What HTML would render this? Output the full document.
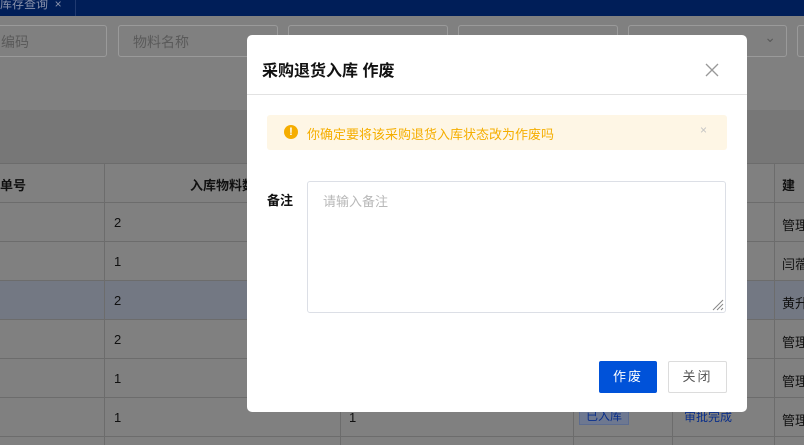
<!DOCTYPE html><html><head><meta charset="utf-8"><style>
*{box-sizing:border-box;margin:0;padding:0}
html,body{width:804px;height:445px;overflow:hidden}
body{position:relative;background:#808080;font-family:"Liberation Sans","Noto Sans CJK SC",sans-serif;font-size:13px;color:#222}
.a{position:absolute;white-space:nowrap}
.top{left:0;top:0;width:804px;height:16px;background:#001e58;color:#8a93ab;font-size:12px;overflow:hidden}
.inp{top:25px;height:32px;border:1px solid #9a9a9a;border-radius:3px;color:#5a5a5a;font-size:14px;padding:6px 14px}
.th{top:110px;left:0;width:804px;height:53px;background:#777}
.hl{height:1px;background:#6c6c6c;left:0;width:804px}
.vl{width:1px;background:#6c6c6c;top:163px;height:282px}
.c{color:#111;font-size:13px}
.modal{left:247px;top:35px;width:500px;height:377px;background:#fff;border-radius:5px}
</style></head><body>
<div class="a top"><span class="a" style="left:0;top:-5px">库存查询 &nbsp;×</span><div class="a" style="left:75px;top:0;width:1px;height:16px;background:#203a70"></div></div>
<div class="a inp" style="left:-10px;width:117px;padding-left:10px">编码</div>
<div class="a inp" style="left:118px;width:160px">物料名称</div>
<div class="a inp" style="left:288px;width:160px"></div>
<div class="a inp" style="left:458px;width:160px"></div>
<div class="a inp" style="left:628px;width:159px"><span class="a" style="right:10px;top:3px">⌄</span></div>
<div class="a inp" style="left:797px;width:40px"></div>
<div class="a th"></div>
<div class="a" style="left:0;top:280px;width:804px;height:39px;background:#737883"></div>
<div class="a hl" style="top:163px"></div><div class="a hl" style="top:202px"></div><div class="a hl" style="top:241px"></div><div class="a hl" style="top:280px"></div><div class="a hl" style="top:319px"></div><div class="a hl" style="top:358px"></div><div class="a hl" style="top:397px"></div><div class="a hl" style="top:436px"></div>
<div class="a vl" style="left:104px;top:163px"></div><div class="a vl" style="left:340px"></div><div class="a vl" style="left:573px"></div><div class="a vl" style="left:672px"></div><div class="a vl" style="left:774px;top:163px"></div>
<div class="a c" style="left:0;top:175px;font-weight:bold">单号</div>
<div class="a c" style="left:190px;top:175px;font-weight:bold">入库物料数</div>
<div class="a c" style="left:782px;top:175px;font-weight:bold">建</div>
<div class="a c" style="left:114px;top:215px">2</div><div class="a c" style="left:114px;top:254px">1</div><div class="a c" style="left:114px;top:293px">2</div><div class="a c" style="left:114px;top:332px">2</div><div class="a c" style="left:114px;top:371px">1</div><div class="a c" style="left:114px;top:410px">1</div>
<div class="a c" style="left:349px;top:410px">1</div>
<div class="a c" style="left:782px;top:215px">管理</div><div class="a c" style="left:782px;top:254px">闫蓿</div><div class="a c" style="left:782px;top:293px">黄升</div><div class="a c" style="left:782px;top:332px">管理</div><div class="a c" style="left:782px;top:371px">管理</div><div class="a c" style="left:782px;top:410px">管理</div>
<div class="a" style="left:579px;top:403px;width:50px;height:22px;background:#6e7890;border:1px solid #5c6c90;color:#0a2f8a;font-size:12px;padding:3px 6px">已入库</div>
<div class="a" style="left:684px;top:408px;color:#0a2f8a;font-size:12px">审批完成</div>
<div class="a modal">
<div class="a" style="left:15px;top:22px;font-size:16px;font-weight:bold;color:#111">采购退货入库 作废</div>
<svg class="a" style="left:458px;top:28px" width="14" height="14"><path d="M1 1L13 13M13 1L1 13" stroke="#999" stroke-width="1.3"/></svg>
<div class="a" style="left:0;top:59px;width:500px;height:1px;background:#e2e2e2"></div>
<div class="a" style="left:20px;top:80px;width:460px;height:35px;background:#fef6e5;border-radius:3px">
<div class="a" style="left:17px;top:10px;width:14px;height:14px;border-radius:50%;background:#f5ad00;color:#fff;font-size:11px;font-weight:bold;text-align:center;line-height:14px">!</div>
<div class="a" style="left:40px;top:9px;color:#f5ae00;font-size:13px">你确定要将该采购退货入库状态改为作废吗</div>
<div class="a" style="left:433px;top:8px;color:#c4c4c4;font-size:12px">×</div>
</div>
<div class="a" style="left:20px;top:155px;font-weight:bold;color:#111;font-size:13px">备注</div>
<div class="a" style="left:60px;top:146px;width:419px;height:132px;border:1px solid #dcdfe6;border-radius:3px">
<div class="a" style="left:15px;top:9px;color:#b8b8b8;font-size:13px">请输入备注</div>
<svg class="a" style="right:1px;bottom:1px" width="12" height="12"><path d="M11 1L1 11M11 5L5 11M11 9L9 11" stroke="#888" stroke-width="1"/></svg>
</div>
<div class="a" style="left:352px;top:326px;width:58px;height:32px;background:#0052d9;border-radius:2px;color:#fff;text-align:center;line-height:32px;letter-spacing:2px">作废</div>
<div class="a" style="left:421px;top:326px;width:59px;height:32px;border:1px solid #dcdcdc;border-radius:2px;color:#555;text-align:center;line-height:30px;letter-spacing:2px">关闭</div>
</div>
</body></html>
